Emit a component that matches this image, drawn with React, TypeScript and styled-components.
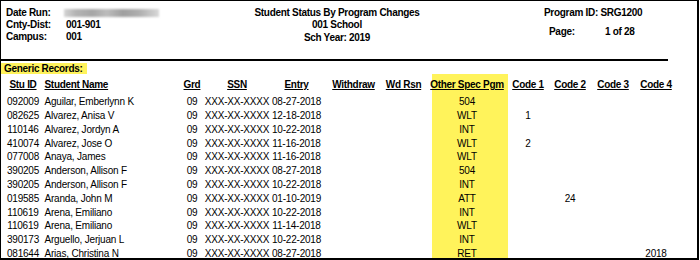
import React from 'react';
import styled, { createGlobalStyle } from 'styled-components';

const HIGHLIGHT = '#fff35b';

const GlobalStyle = createGlobalStyle`
  html, body {
    margin: 0;
    padding: 0;
    background: #fff;
  }
  body {
    font-family: 'Liberation Sans', Arial, sans-serif;
    color: #000;
  }
`;

const Frame = styled.div`
  width: 699px;
  height: 260px;
  box-sizing: border-box;
  border-style: solid;
  border-color: #000;
  border-width: 1px 2px 2px 1px;
  overflow: hidden;
  background: #fff;
  font-size: 10px;
`;

const ReportHeader = styled.header`
  display: grid;
  grid-template-columns: 201px 260px 1fr;
  height: 58px;
  box-sizing: border-box;
  padding: 6.1px 0 0 5px;
  font-weight: 700;
  letter-spacing: -0.3px;
  line-height: 12.2px;
  white-space: nowrap;
`;

const MetaGrid = styled.div`
  display: grid;
  grid-template-columns: 60px auto;
  grid-auto-rows: 12.2px;
`;

const Redacted = styled.div`
  width: 95px;
  height: 8px;
  margin: 2.2px 0 0 -2px;
  background: linear-gradient(
    90deg,
    #d4d4d4 0%,
    #b4b4b4 12%,
    #a6a6a6 30%,
    #bcbcbc 45%,
    #9f9f9f 62%,
    #b0b0b0 80%,
    #d8d8d8 100%
  );
  filter: blur(0.8px);
`;

const TitleBlock = styled.div`
  text-align: center;
`;

const InfoBlock = styled.div`
  padding-left: 77px;
`;

const PageRow = styled.div`
  display: grid;
  grid-template-columns: 56px auto;
  margin-top: 7.1px;
  padding-left: 5px;
`;

const Rule = styled.div`
  width: 667px;
  height: 2px;
  background: #000;
`;

const SectionLabel = styled.div`
  width: 86px;
  height: 11px;
  box-sizing: border-box;
  margin-top: 2px;
  padding-left: 3px;
  background: ${HIGHLIGHT};
  font-weight: 700;
  letter-spacing: -0.3px;
  line-height: 11px;
  white-space: nowrap;
`;

const Table = styled.div`
  padding-left: 2px;
`;

type Column = {
  key: string;
  label: string;
  width: number;
  align: 'left' | 'center';
  padRight?: number;
  padLeft?: number;
  highlight?: boolean;
};

const COLUMNS: Column[] = [
  { key: 'id', label: 'Stu ID', width: 40, align: 'center' },
  { key: 'name', label: 'Student Name', width: 137, align: 'left', padLeft: 1.5 },
  { key: 'grd', label: 'Grd', width: 24, align: 'center' },
  { key: 'ssn', label: 'SSN', width: 66, align: 'center' },
  { key: 'entry', label: 'Entry', width: 53, align: 'center' },
  { key: 'withdraw', label: 'Withdraw', width: 61, align: 'center' },
  { key: 'wdRsn', label: 'Wd Rsn', width: 48, align: 'center', padRight: 9 },
  { key: 'spec', label: 'Other Spec Pgm', width: 76, align: 'center', padRight: 6, highlight: true },
  { key: 'code1', label: 'Code 1', width: 40, align: 'center' },
  { key: 'code2', label: 'Code 2', width: 44, align: 'center' },
  { key: 'code3', label: 'Code 3', width: 42, align: 'center' },
  { key: 'code4', label: 'Code 4', width: 44, align: 'center' },
];

const Row = styled.div<{ $header?: boolean }>`
  display: grid;
  grid-template-columns: ${COLUMNS.map((c) => `${c.width}px`).join(' ')};
  line-height: 13.8px;
  font-weight: ${({ $header }) => ($header ? 700 : 400)};
  letter-spacing: ${({ $header }) => ($header ? '-0.3px' : '-0.2px')};
  white-space: nowrap;
`;

const Cell = styled.div<{
  $align: 'left' | 'center';
  $highlight?: boolean;
  $header?: boolean;
  $padLeft?: number;
  $padRight?: number;
}>`
  display: flex;
  justify-content: ${({ $align }) => ($align === 'left' ? 'flex-start' : 'center')};
  min-width: 0;
  padding-left: ${({ $padLeft }) => $padLeft ?? 0}px;
  padding-right: ${({ $padRight }) => $padRight ?? 0}px;
  padding-top: ${({ $header }) => ($header ? '4px' : '0')};
  padding-bottom: ${({ $header }) => ($header ? '3.5px' : '0')};
  background: ${({ $highlight }) => ($highlight ? HIGHLIGHT : 'transparent')};
`;

const HeaderText = styled.span`
  text-decoration: underline;
  text-decoration-thickness: 1px;
  text-underline-offset: 1px;
`;

type Record = { [key: string]: string };

const RECORDS: Record[] = [
  { id: '092009', name: 'Aguilar, Emberlynn K', entry: '08-27-2018', spec: '504' },
  { id: '082625', name: 'Alvarez, Anisa V', entry: '12-18-2018', spec: 'WLT', code1: '1' },
  { id: '110146', name: 'Alvarez, Jordyn A', entry: '10-22-2018', spec: 'INT' },
  { id: '410074', name: 'Alvarez, Jose O', entry: '11-16-2018', spec: 'WLT', code1: '2' },
  { id: '077008', name: 'Anaya, James', entry: '11-16-2018', spec: 'WLT' },
  { id: '390205', name: 'Anderson, Allison F', entry: '08-27-2018', spec: '504' },
  { id: '390205', name: 'Anderson, Allison F', entry: '10-22-2018', spec: 'INT' },
  { id: '019585', name: 'Aranda, John M', entry: '01-10-2019', spec: 'ATT', code2: '24' },
  { id: '110619', name: 'Arena, Emiliano', entry: '10-22-2018', spec: 'INT' },
  { id: '110619', name: 'Arena, Emiliano', entry: '11-14-2018', spec: 'WLT' },
  { id: '390173', name: 'Arguello, Jerjuan L', entry: '10-22-2018', spec: 'INT' },
  { id: '081644', name: 'Arias, Christina N', entry: '08-27-2018', spec: 'RET', code4: '2018' },
];

const App: React.FC = () => (
  <>
    <GlobalStyle />
    <Frame>
      <ReportHeader>
        <MetaGrid>
          <span>Date Run:</span>
          <Redacted />
          <span>Cnty-Dist:</span>
          <span>001-901</span>
          <span>Campus:</span>
          <span>001</span>
        </MetaGrid>

        <TitleBlock>
          <div>Student Status By Program Changes</div>
          <div>001 School</div>
          <div>Sch Year: 2019</div>
        </TitleBlock>

        <InfoBlock>
          <div>Program ID: SRG1200</div>
          <PageRow>
            <span>Page:</span>
            <span>1 of 28</span>
          </PageRow>
        </InfoBlock>
      </ReportHeader>

      <Rule />
      <SectionLabel>Generic Records:</SectionLabel>

      <Table>
        <Row $header>
          {COLUMNS.map((col) => (
            <Cell
              key={col.key}
              $header
              $align={col.align}
              $highlight={col.highlight}
              $padLeft={col.padLeft}
              $padRight={col.padRight}
            >
              <HeaderText>{col.label}</HeaderText>
            </Cell>
          ))}
        </Row>

        {RECORDS.map((rec, i) => {
          const values: Record = { grd: '09', ssn: 'XXX-XX-XXXX', ...rec };
          return (
            <Row key={`${rec.id}-${i}`}>
              {COLUMNS.map((col) => (
                <Cell
                  key={col.key}
                  $align={col.align}
                  $highlight={col.highlight}
                  $padLeft={col.padLeft}
                  $padRight={col.padRight}
                >
                  {values[col.key] ?? ''}
                </Cell>
              ))}
            </Row>
          );
        })}
      </Table>
    </Frame>
  </>
);

export default App;
